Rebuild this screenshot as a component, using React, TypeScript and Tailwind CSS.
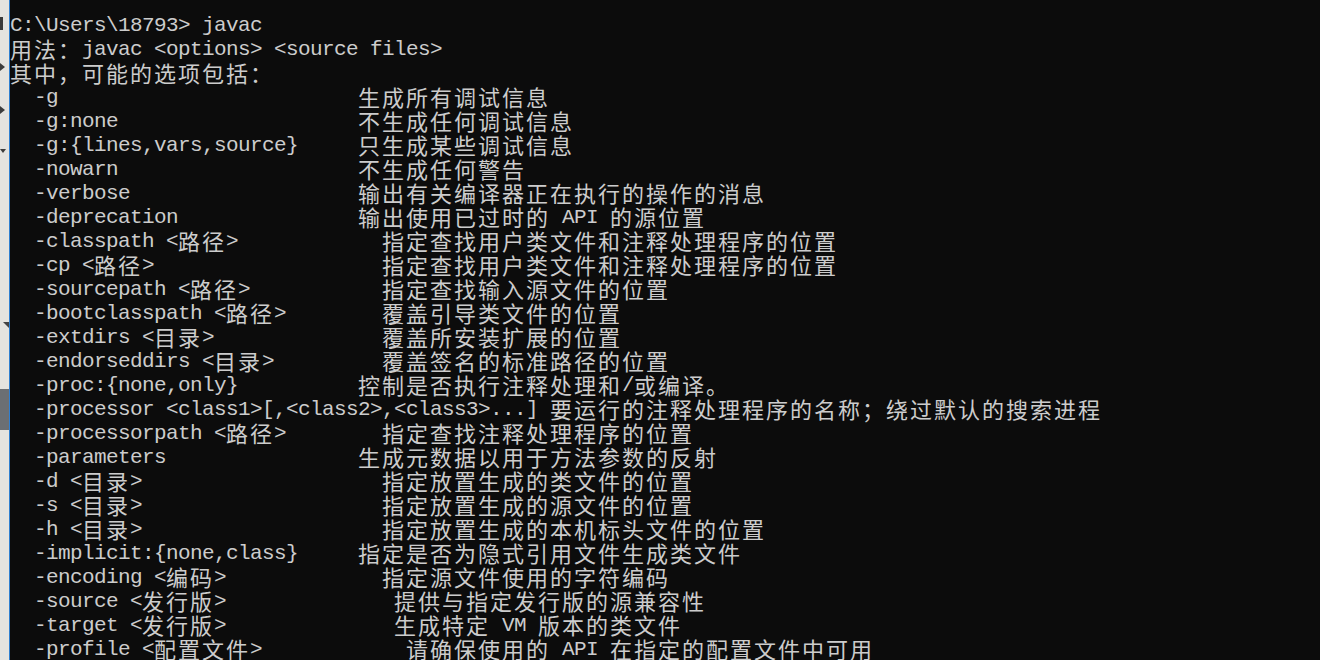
import React from "react";

const cells = (s: string) =>
  [...s].reduce((n, c) => n + (c.charCodeAt(0) > 127 ? 2 : 1), 0);

const opt = (o: string, col: number, d: string) => {
  const s = "  " + o;
  return s + " ".repeat(Math.max(1, col - cells(s))) + d;
};

const ROWS: string[] = [
  "C:\\Users\\18793> javac",
  "用法：javac <options> <source files>",
  "其中，可能的选项包括：",
  opt("-g", 29, "生成所有调试信息"),
  opt("-g:none", 29, "不生成任何调试信息"),
  opt("-g:{lines,vars,source}", 29, "只生成某些调试信息"),
  opt("-nowarn", 29, "不生成任何警告"),
  opt("-verbose", 29, "输出有关编译器正在执行的操作的消息"),
  opt("-deprecation", 29, "输出使用已过时的 API 的源位置"),
  opt("-classpath <路径>", 31, "指定查找用户类文件和注释处理程序的位置"),
  opt("-cp <路径>", 31, "指定查找用户类文件和注释处理程序的位置"),
  opt("-sourcepath <路径>", 31, "指定查找输入源文件的位置"),
  opt("-bootclasspath <路径>", 31, "覆盖引导类文件的位置"),
  opt("-extdirs <目录>", 31, "覆盖所安装扩展的位置"),
  opt("-endorseddirs <目录>", 31, "覆盖签名的标准路径的位置"),
  opt("-proc:{none,only}", 29, "控制是否执行注释处理和/或编译。"),
  opt("-processor <class1>[,<class2>,<class3>...]", 45, "要运行的注释处理程序的名称；绕过默认的搜索进程"),
  opt("-processorpath <路径>", 31, "指定查找注释处理程序的位置"),
  opt("-parameters", 29, "生成元数据以用于方法参数的反射"),
  opt("-d <目录>", 31, "指定放置生成的类文件的位置"),
  opt("-s <目录>", 31, "指定放置生成的源文件的位置"),
  opt("-h <目录>", 31, "指定放置生成的本机标头文件的位置"),
  opt("-implicit:{none,class}", 29, "指定是否为隐式引用文件生成类文件"),
  opt("-encoding <编码>", 31, "指定源文件使用的字符编码"),
  opt("-source <发行版>", 32, "提供与指定发行版的源兼容性"),
  opt("-target <发行版>", 32, "生成特定 VM 版本的类文件"),
  opt("-profile <配置文件>", 33, "请确保使用的 API 在指定的配置文件中可用"),
];

type Run = { wide: boolean; text: string };

const splitRuns = (s: string): Run[] => {
  const runs: Run[] = [];
  for (const c of [...s]) {
    const wide = c.charCodeAt(0) > 127;
    const last = runs[runs.length - 1];
    if (last && last.wide === wide) last.text += c;
    else runs.push({ wide, text: c });
  }
  return runs;
};

function Line({ text }: { text: string }) {
  const runs = splitRuns(text);
  return (
    <div className="flex h-[24px] items-start whitespace-pre">
      {runs.map((r, i) =>
        r.wide ? (
          <span
            key={i}
            className="block h-[24px] shrink-0 text-[22px] leading-[24px] tracking-[2px] font-['Noto_Sans_CJK_SC',sans-serif]"
            style={{ width: [...r.text].length * 24 }}
          >
            {r.text}
          </span>
        ) : (
          <span
            key={i}
            className="block h-[24px] shrink-0 pt-[3px] text-[21px] leading-[21px] tracking-[-0.6px] font-['Liberation_Mono',monospace]"
            style={{ width: r.text.length * 12 }}
          >
            {r.text}
          </span>
        )
      )}
    </div>
  );
}

export default function App() {
  return (
    <div className="flex h-[660px] w-[1320px] overflow-hidden bg-[#0c0c0c]">
      <div className="relative h-full w-[9px] shrink-0 bg-[#e4e3df]">
        <div className="absolute left-0 top-[17px] h-[13px] w-[3px] bg-[#3a3a3a]" />
        <div className="absolute left-0 top-[63px] h-0 w-0 border-y-[4px] border-l-[5px] border-y-transparent border-l-[#3c3c3c]" />
        <div className="absolute left-0 top-[106px] h-0 w-0 border-y-[4px] border-l-[5px] border-y-transparent border-l-[#3c3c3c]" />
        <div className="absolute left-0 top-[149px] h-0 w-0 border-x-[3px] border-t-[4px] border-x-transparent border-t-[#3c3c3c]" />
        <div className="absolute left-[3px] top-[322px] h-0 w-0 border-r-[6px] border-b-[6px] border-r-[#444] border-b-transparent" />
        <div className="absolute left-0 top-[389px] h-[41px] w-[9px] bg-[#6b6f73]" />
      </div>
      <div className="h-full w-[1px] shrink-0 bg-[#2f7fd0]" />
      <div className="flex min-w-0 flex-1 flex-col pt-[12px] text-[#cccccc]">
        {ROWS.map((r, i) => (
          <Line key={i} text={r} />
        ))}
      </div>
    </div>
  );
}
